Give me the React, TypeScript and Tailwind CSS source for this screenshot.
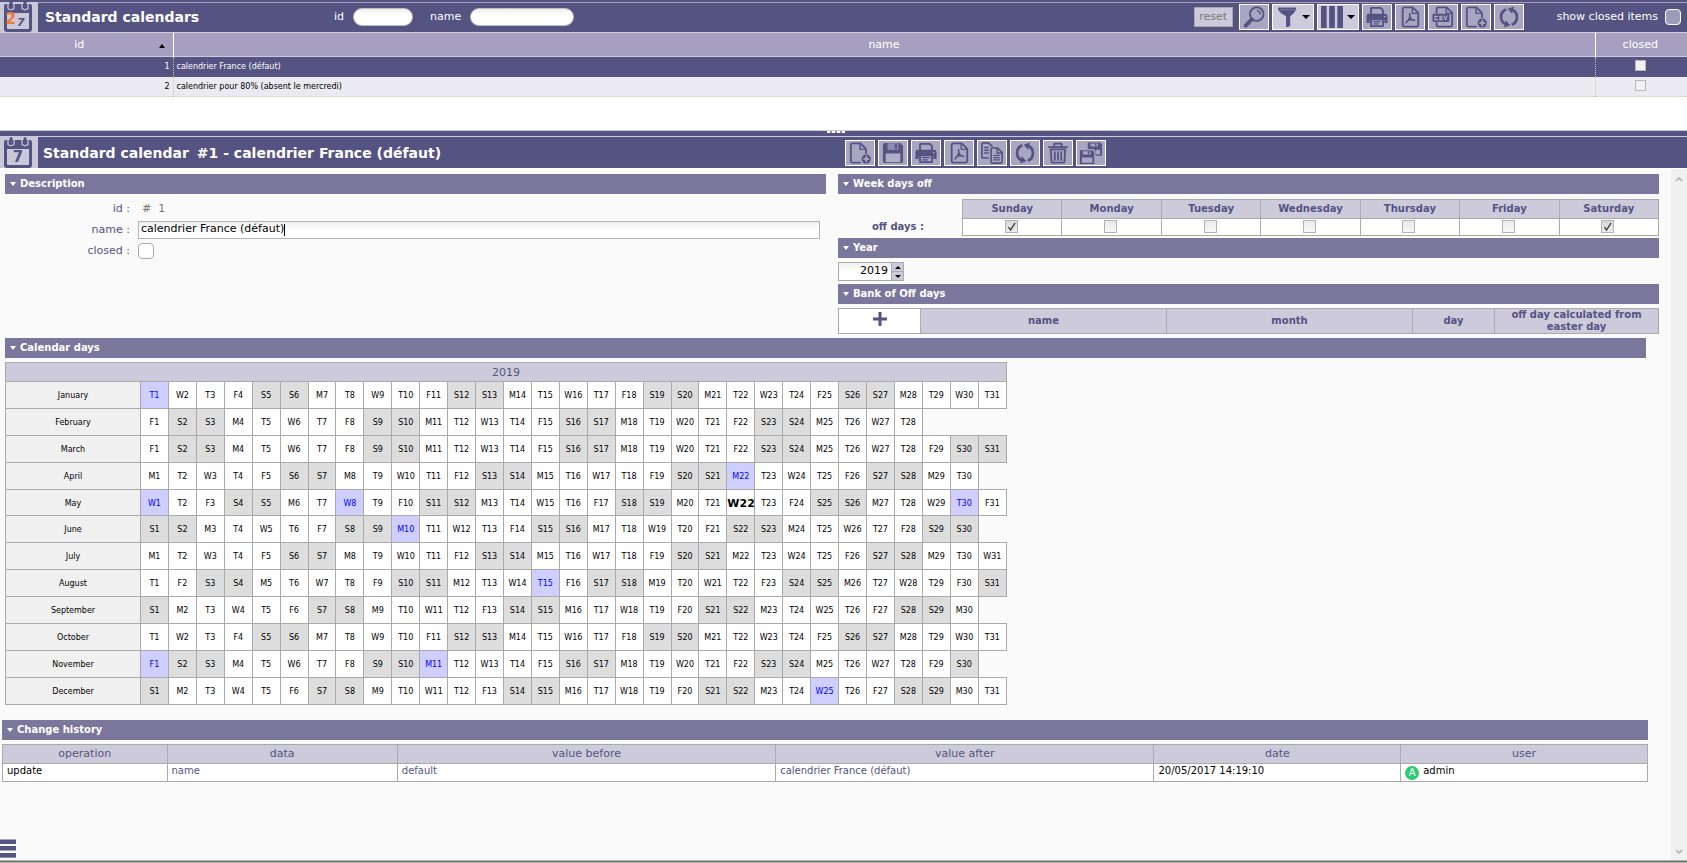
import React, { useState } from "react";

const YEAR = 2019;
const MONTHS = [
  "January", "February", "March", "April", "May", "June",
  "July", "August", "September", "October", "November", "December",
];
const DAYS = ["Sunday", "Monday", "Tuesday", "Wednesday", "Thursday", "Friday", "Saturday"];
const HOLIDAYS = ["1-1", "4-22", "5-1", "5-8", "5-30", "6-10", "8-15", "11-1", "11-11", "12-25"];
const CURRENT_DAY = "5-22";

type IconProps = { children: React.ReactNode };

function Icon({ children }: IconProps) {
  return (
    <svg
      viewBox="0 0 24 24"
      className="h-[22px] w-[22px] shrink-0 text-[#545381]"
      fill="none"
      stroke="currentColor"
      strokeWidth="2"
      strokeLinejoin="round"
      strokeLinecap="round"
      aria-hidden="true"
    >
      {children}
    </svg>
  );
}

const SearchIcon = () => (
  <Icon>
    <circle cx="15" cy="8.800" r="7.400" />
    <path d="M15.500 5a4 4 0 0 1 3.400 3.600" strokeWidth="1.500" />
    <path d="M9.600 14.600 3 21.400" strokeWidth="4.200" />
  </Icon>
);
const FilterIcon = () => (
  <Icon>
    <path d="M2 1.600h20c0 4.400-4 7.400-6.500 9.400V21.500l-2.500 1.500h-2V11C6 8.600 2 5.600 2 1.600Z" fill="currentColor" stroke="none" />
    <path d="M4.500 4h15" stroke="#8b88ac" strokeWidth="0.800" />
  </Icon>
);
const ColumnsIcon = () => (
  <Icon>
    <path d="M0 0h6.200v24H0zM8.900 0h6.200v24H8.900zM17.800 0H24v24h-6.200z" fill="currentColor" stroke="none" />
  </Icon>
);
const PrintIcon = () => (
  <Icon>
    <path d="M5.500 8V2h10.500l2.500 2.500V8" />
    <path d="M3 8.500h18a2.500 2.500 0 0 1 2.500 2.500v7.500H20V15H4v3.500H.5V11A2.500 2.500 0 0 1 3 8.500Z" fill="currentColor" stroke="none" />
    <path d="M5.500 14.500h13V22h-13z" fill="#a9a6c2" />
    <path d="M8.500 17h7M8.500 19.500h5" strokeWidth="1.300" />
    <circle cx="20.500" cy="11.500" r="1" fill="#a9a6c2" stroke="none" />
  </Icon>
);
const PdfIcon = () => (
  <Icon>
    <path d="M4 3.500A2 2 0 0 1 6 1.500h9l6 6V20.500a2 2 0 0 1-2 2H6a2 2 0 0 1-2-2z" />
    <path d="M14.500 2v6h6" strokeWidth="1.500" />
    <path d="M11.500 8.500c0 4 1.500 7 5.500 7.500M11.800 8.500c.4 4-1.300 7.500-4.300 10M8.500 16.500c2.500-1.500 5-2 8.500-1" strokeWidth="1.500" />
  </Icon>
);
const CsvIcon = () => (
  <Icon>
    <path d="M5 7.500v-4a2 2 0 0 1 2-2h9l6 6v13a2 2 0 0 1-2 2H7a2 2 0 0 1-2-2v-2" />
    <path d="M15.500 2v6h6" strokeWidth="1.500" />
    <rect x="0.500" y="8.500" width="18.500" height="9" rx="1.500" fill="currentColor" stroke="none" />
    <path d="M6 11.300H3.300v3.600H6M11 11.200H8.500V13H11v1.900H8.300M13 11l1.700 4 1.700-4" stroke="#b5b2cb" strokeWidth="1.200" />
  </Icon>
);
const NewIcon = () => (
  <Icon>
    <path d="M12 22.500H4a2 2 0 0 1-2-2v-17a2 2 0 0 1 2-2h8.500l6 6V12" />
    <path d="M12 2v6h6" strokeWidth="1.500" />
    <circle cx="18.800" cy="18.500" r="5" fill="currentColor" stroke="none" />
    <path d="M18.800 15.800v5.400M16.100 18.500h5.400" stroke="#b5b2cb" strokeWidth="1.600" />
  </Icon>
);
const RefreshIcon = () => (
  <Icon>
    <path d="M9 3.500A9 9 0 0 0 8.500 20M15 20.500A9 9 0 0 0 15.500 4" strokeWidth="3" strokeLinecap="butt" />
    <path d="M8.500 15.500 13.500 21l-7 2.500zM15.500 8.500 10.500 3l7-2.500z" fill="currentColor" stroke="none" />
  </Icon>
);
const SaveIcon = () => (
  <Icon>
    <path d="M1 3a2 2 0 0 1 2-2h17l3 3v17a2 2 0 0 1-2 2H3a2 2 0 0 1-2-2z" fill="currentColor" stroke="none" />
    <path d="M6 1.500h12V8.500H6z" fill="#8f8cb0" stroke="none" />
    <path d="M14 2.500h2.500v5H14z" fill="currentColor" stroke="none" />
    <path d="M4 12.500h16V22H4z" fill="#b0adc8" stroke="none" />
  </Icon>
);
const CopyIcon = () => (
  <Icon>
    <path d="M8 17.500H2.500a1.500 1.500 0 0 1-1.500-1.500V2.500A1.500 1.500 0 0 1 2.500 1H8l4 3.500" strokeWidth="1.800" />
    <path d="M4 6h4M4 9h4M4 12h4" strokeWidth="1.500" />
    <path d="M11 8a1.500 1.500 0 0 1 1.500-1.500H18l5 5v10a1.500 1.500 0 0 1-1.500 1.500h-9A1.500 1.500 0 0 1 11 21.500z" strokeWidth="1.800" />
    <path d="M17.500 7v5H23" strokeWidth="1.500" />
    <path d="M13.800 14.500h6.400M13.800 17h6.400M13.800 19.500h6.400" strokeWidth="1.300" />
  </Icon>
);
const TrashIcon = () => (
  <Icon>
    <path d="M2 5.500h20M8 5V1.800h8V5" />
    <path d="M4 8h16l-1 13.500a1 1 0 0 1-1 1H6a1 1 0 0 1-1-1z" />
    <path d="M8.500 11v8.500M12 11v8.500M15.500 11v8.500" strokeWidth="1.900" />
  </Icon>
);
const SaveAllIcon = () => (
  <Icon>
    <path d="M8.500 0.500H22l2 2V15H17V9.500L14.500 7.500h-6z" fill="currentColor" stroke="none" />
    <path d="M11.500 1.500h8v3.500h-8zM17.500 8.500h4.500v5h-4.500z" fill="#a9a6c2" stroke="none" />
    <path d="M16.500 1.500h1.500v3h-1.500z" fill="currentColor" stroke="none" />
    <path d="M0 9H13.500l2 2V24H0z" fill="currentColor" stroke="none" />
    <path d="M3 10h8.500v3.500H3zM2 17h11.500v5.500H2z" fill="#a9a6c2" stroke="none" />
    <path d="M8.500 10h1.500v3H8.500z" fill="currentColor" stroke="none" />
  </Icon>
);

function CalendarLogo({ stacked = false }: { stacked?: boolean }) {
  return (
    <div className="flex w-[38px] shrink-0 items-center justify-center self-stretch bg-[#cbc8da] pr-0.5">
      <svg viewBox="0 0 30 32" className="h-8 w-[30px]" aria-hidden="true">
        <path d="M3 3h24q2 0 2 2v23q0 3-3 3H4q-3 0-3-3V5q0-2 2-2Z" fill="#545381" />
        <path d="M4 12h22v15q0 1-1 1H5q-1 0-1-1z" fill="#cbc8da" />
        <path d="M5 3v4.500q3 2.500 6 0V3M19 3v4.500q3 2.500 6 0V3" fill="none" stroke="#cbc8da" strokeWidth="1.200" />
        <rect x="6.500" y="0" width="3" height="7" rx="1.500" fill="#545381" />
        <rect x="20.500" y="0" width="3" height="7" rx="1.500" fill="#545381" />
        {stacked ? (
          <>
            <text x="2" y="23" className="font-['DejaVu_Sans',sans-serif] text-[16px] font-bold" fill="#ee7a36">
              2
            </text>
            <text x="14" y="25" className="font-['DejaVu_Sans',sans-serif] text-[11px] font-bold italic" fill="#545381">
              7
            </text>
          </>
        ) : (
          <text
            x="15"
            y="25"
            textAnchor="middle"
            className="font-['DejaVu_Sans',sans-serif] text-[15px] font-bold"
            fill="#545381"
          >
            7
          </text>
        )}
      </svg>
    </div>
  );
}

function Caret() {
  return (
    <svg viewBox="0 0 8 4" className="h-1 w-2" aria-hidden="true">
      <path d="M0 0h8L4 4z" fill="#000" />
    </svg>
  );
}

function ToolButton({ label, menu = false, children }: { label: string; menu?: boolean; children: React.ReactNode }) {
  return (
    <button
      type="button"
      aria-label={label}
      className={
        menu
          ? "flex h-[26px] w-[42px] items-center justify-center gap-1 border border-white bg-[#cdcadb]"
          : "flex h-[26px] w-[30px] items-center justify-center border border-white bg-[#a9a6c2]"
      }
    >
      {children}
      {menu && <Caret />}
    </button>
  );
}

function Tick({ label, checked = false }: { label: string; checked?: boolean }) {
  const [on, setOn] = useState(checked);
  return (
    <span className="relative mx-auto block h-[13px] w-[13px]">
      <input
        type="checkbox"
        aria-label={label}
        checked={on}
        onChange={() => setOn(!on)}
        className="block h-[13px] w-[13px] appearance-none border border-[#b3b3b3] bg-linear-to-b from-[#e9e9e9] to-[#f8f8f8] checked:from-[#d5d5d5] checked:to-[#eeeeee]"
      />
      {on && (
        <svg viewBox="0 0 13 13" className="pointer-events-none absolute inset-0 h-[13px] w-[13px]" aria-hidden="true">
          <path d="M3.500 7 5.500 10 10 3" fill="none" stroke="#333" strokeWidth="1.300" />
        </svg>
      )}
    </span>
  );
}

function SectionTitle({ children }: { children: React.ReactNode }) {
  return (
    <h2 className="bg-[#7b769b] text-[10px] leading-5 font-bold text-white">
      <button type="button" className="flex h-5 w-full items-center gap-1 pl-[5px] text-left">
        <svg viewBox="0 0 6 4" className="h-1 w-1.5" aria-hidden="true">
          <path d="M0 0h6L3 4z" fill="#fff" />
        </svg>
        {children}
      </button>
    </h2>
  );
}

const th = "border border-[#aaaaaa] bg-[#cdcadb] text-[#545381]";

function StandardList() {
  const rows = [
    { id: 1, name: "calendrier France (défaut)" },
    { id: 2, name: "calendrier pour 80% (absent le mercredi)" },
  ];
  return (
    <section>
      <header className="flex h-8 items-center border-t-2 border-[#545381] bg-[#545381] text-[11px] text-white shadow-[inset_0_1px_0_#a69fbf]">
        <CalendarLogo stacked />
        <h1 className="w-[289px] pl-[7px] text-[14px] font-bold">Standard calendars</h1>
        <label htmlFor="filter-id" className="pl-[7px]">id</label>
        <input id="filter-id" className="ml-[9px] h-[18px] w-[60px] rounded-[9px] border border-[#c0c0c0] bg-linear-to-b from-[#eeeeee] to-white to-40% px-2 text-black" />
        <label htmlFor="filter-name" className="ml-[17px]">name</label>
        <input id="filter-name" className="ml-[9px] h-[18px] w-[104px] rounded-[9px] border border-[#c0c0c0] bg-linear-to-b from-[#eeeeee] to-white to-40% px-2 text-black" />
        <div className="ml-auto flex items-center gap-[3px] pr-1.5">
          <button type="button" className="mr-[3px] h-5 w-[39px] border border-[#a9a6a6] bg-[#cdcadb] text-[11px] text-[#777]">
            reset
          </button>
          <ToolButton label="Search"><SearchIcon /></ToolButton>
          <ToolButton label="Filter" menu><FilterIcon /></ToolButton>
          <ToolButton label="Columns" menu><ColumnsIcon /></ToolButton>
          <ToolButton label="Print"><PrintIcon /></ToolButton>
          <ToolButton label="Export PDF"><PdfIcon /></ToolButton>
          <ToolButton label="Export CSV"><CsvIcon /></ToolButton>
          <ToolButton label="New"><NewIcon /></ToolButton>
          <ToolButton label="Refresh"><RefreshIcon /></ToolButton>
          <label htmlFor="show-closed" className="ml-[30px]">show closed items</label>
          <input id="show-closed" type="checkbox" className="ml-1 h-4 w-4 appearance-none rounded border border-white bg-[#9d9aba] checked:bg-white" />
        </div>
      </header>
      <table className="w-full table-fixed border-collapse text-[8px]">
        <colgroup>
          <col className="w-[173px]" />
          <col />
          <col className="w-[92px]" />
        </colgroup>
        <thead>
          <tr className="h-6 border-y border-[#cdcadb] bg-[#a69fbf] text-[11px] text-white">
            <th className="border-r border-white p-0 pt-0.5 font-normal">
              <div className="flex items-center">
                <span className="flex-1">id</span>
                <svg viewBox="0 0 6 4" className="mr-2 h-1 w-1.5" aria-hidden="true">
                  <path d="M3 0 6 4H0z" fill="#000" />
                </svg>
              </div>
            </th>
            <th className="border-r border-white p-0 pt-0.5 font-normal">name</th>
            <th className="p-0 pt-0.5 pr-0.5 font-normal">closed</th>
          </tr>
        </thead>
        <tbody>
          {rows.map((row, i) => (
            <tr
              key={row.id}
              className={
                i === 0
                  ? "h-5 bg-[#545381] text-white"
                  : "h-5 border-b border-dotted border-b-[#d3c8a0] bg-[#ebeaf1] text-black"
              }
            >
              <td className="border-r border-dotted border-r-[#d3c8a0] p-0 pt-px pr-[3px] text-right">{row.id}</td>
              <td className="border-r border-dotted border-r-[#d3c8a0] p-0 pt-px pl-[3px]">{row.name}</td>
              <td className="p-0 pr-0.5 pb-0.5">
                <input
                  type="checkbox"
                  aria-label={"closed " + row.id}
                  className="mx-auto block h-[11px] w-[11px] appearance-none border border-[#b8b8b8] bg-[#f2f2f2] checked:bg-[#777]"
                />
              </td>
            </tr>
          ))}
        </tbody>
      </table>
      <div className="h-[33px] bg-white" />
    </section>
  );
}

function Description() {
  return (
    <section className="text-[11px] text-[#545381]">
      <SectionTitle>Description</SectionTitle>
      <div className="grid grid-cols-[125px_1fr] items-center gap-x-2 pt-1 pr-1.5">
        <span className="text-right leading-[21px]">id&nbsp;:</span>
        <span className="pl-1 leading-[21px] text-[#777]">#&nbsp; 1</span>
        <label htmlFor="name" className="text-right leading-[21px]">name&nbsp;:</label>
        <div className="flex h-[18px] items-center border border-[#b3b3b3] bg-linear-to-b from-[#efefef] to-white to-50% pl-0.5">
          <input
            id="name"
            defaultValue="calendrier France (défaut)"
            className="[field-sizing:content] bg-transparent text-black outline-none"
          />
          <span className="h-3 w-px bg-black" />
        </div>
        <label htmlFor="closed" className="text-right leading-[21px]">closed&nbsp;:</label>
        <input id="closed" type="checkbox" className="h-4 w-4 appearance-none rounded border border-[#aaaaaa] bg-white checked:bg-[#545381]" />
      </div>
    </section>
  );
}

function Settings() {
  const [year, setYear] = useState(YEAR);
  return (
    <section className="flex flex-col text-[10px] text-[#545381]">
      <SectionTitle>Week days off</SectionTitle>
      <div className="flex items-end pt-[5px] pb-0.5">
        <div className="w-[124px] shrink-0 pr-[38px] pb-0.5 text-right leading-[15px] font-bold">off days :</div>
        <table className="flex-1 table-fixed border-collapse">
          <thead>
            <tr className="h-[19px]">
              {DAYS.map((d) => (
                <th key={d} className={th + " p-0 leading-[18px] font-bold"}>{d}</th>
              ))}
            </tr>
          </thead>
          <tbody>
            <tr className="h-[17px] bg-white">
              {DAYS.map((d, i) => (
                <td key={d} className="w-[99px] border border-[#aaaaaa] p-0 pr-0.5 pb-0.5">
                  <Tick label={d} checked={i === 0 || i === 6} />
                </td>
              ))}
            </tr>
          </tbody>
        </table>
      </div>
      <SectionTitle>Year</SectionTitle>
      <div className="pt-1 pb-[3px]">
        <div className="flex h-[19px] w-[66px] border border-[#aaaaaa] bg-white text-[11px]">
          <input
            aria-label="year"
            inputMode="numeric"
            value={year}
            onChange={(e) => setYear(Number(e.target.value) || YEAR)}
            className="min-w-0 flex-1 bg-linear-to-b from-[#efefef] to-white to-50% pr-[3px] text-right text-black outline-none"
          />
          <div className="flex w-3 flex-col border-l border-[#aaaaaa] bg-[#cdcadb]">
            <button type="button" aria-label="next year" onClick={() => setYear(year + 1)} className="flex flex-1 items-center justify-center border-b border-[#aaaaaa]">
              <svg viewBox="0 0 6 3" className="h-[3px] w-1.5" aria-hidden="true"><path d="M3 0 6 3H0z" /></svg>
            </button>
            <button type="button" aria-label="previous year" onClick={() => setYear(year - 1)} className="flex flex-1 items-center justify-center">
              <svg viewBox="0 0 6 3" className="h-[3px] w-1.5" aria-hidden="true"><path d="M0 0h6L3 3z" /></svg>
            </button>
          </div>
        </div>
      </div>
      <SectionTitle>Bank of Off days</SectionTitle>
      <div className="pt-1">
        <table className="w-full table-fixed border-collapse leading-3">
          <colgroup>
            <col className="w-[10%]" />
            <col className="w-[30%]" />
            <col className="w-[30%]" />
            <col className="w-[10%]" />
            <col className="w-[20%]" />
          </colgroup>
          <thead>
            <tr className="h-[25px]">
              <th className="border border-[#aaaaaa] bg-white p-0 pb-1">
                <button type="button" aria-label="Add off day" className="mx-auto block h-4 w-4">
                  <svg viewBox="0 0 16 16" className="h-4 w-4" aria-hidden="true">
                    <path d="M8 1v14M1 8h14" stroke="#545381" strokeWidth="3" />
                  </svg>
                </button>
              </th>
              <th className={th + " p-0"}>name</th>
              <th className={th + " p-0"}>month</th>
              <th className={th + " p-0"}>day</th>
              <th className={th + " px-2 py-0"}>off day calculated from easter day</th>
            </tr>
          </thead>
        </table>
      </div>
    </section>
  );
}

function dayClass(key: string, weekday: number) {
  if (key === CURRENT_DAY) return "border border-[#aaaaaa] bg-white p-0 pt-0.5 text-[11px] leading-3 font-bold";
  if (HOLIDAYS.includes(key)) return "border border-[#aaaaaa] bg-[#ceceff] p-0 pt-0.5 text-[#0000ff]";
  if (weekday === 0 || weekday === 6) return "border border-[#aaaaaa] bg-[#dddddd] p-0 pt-0.5";
  return "border border-[#aaaaaa] bg-white p-0 pt-0.5";
}

function CalendarDays() {
  return (
    <section className="pt-1 pr-[25px] pl-[5px]">
      <SectionTitle>Calendar days</SectionTitle>
      <table className="mt-1 w-[1002px] table-fixed border-collapse text-center text-[8px] leading-3 text-black">
        <colgroup>
          <col className="w-[135px]" />
          {Array.from({ length: 31 }, (_, i) => <col key={i} />)}
        </colgroup>
        <thead>
          <tr className="h-[19px]">
            <th colSpan={32} className={th + " p-0 pt-0.5 text-[11px] font-normal"}>{YEAR}</th>
          </tr>
        </thead>
        <tbody>
          {MONTHS.map((month, m) => {
            const count = new Date(YEAR, m + 1, 0).getDate();
            return (
              <tr key={month} className={month === "May" ? "h-[26px]" : "h-[27px]"}>
                <th className="border border-[#aaaaaa] bg-[#f0f0f0] p-0 pt-0.5 font-normal">{month}</th>
                {Array.from({ length: count }, (_, i) => {
                  const weekday = new Date(YEAR, m, i + 1).getDay();
                  return (
                    <td key={i} className={dayClass(m + 1 + "-" + (i + 1), weekday)}>
                      {DAYS[weekday][0] + (i + 1)}
                    </td>
                  );
                })}
              </tr>
            );
          })}
        </tbody>
      </table>
    </section>
  );
}

function History() {
  const td = "border border-[#aaaaaa] bg-white py-0 pr-0 pl-1";
  return (
    <section className="pt-[15px] pr-[23px] pl-0.5">
      <SectionTitle>Change history</SectionTitle>
      <table className="mt-1 w-full table-fixed border-collapse text-left text-[10px] text-[#545381]">
        <colgroup>
          <col className="w-[10%]" />
          <col className="w-[14%]" />
          <col className="w-[23%]" />
          <col className="w-[23%]" />
          <col className="w-[15%]" />
          <col className="w-[15%]" />
        </colgroup>
        <thead>
          <tr className="h-[19px] text-center text-[11px]">
            {["operation", "data", "value before", "value after", "date", "user"].map((h) => (
              <th key={h} className={th + " p-0 leading-[18px] font-normal"}>{h}</th>
            ))}
          </tr>
        </thead>
        <tbody>
          <tr className="h-[18px] align-top leading-[14px]">
            <td className={td + " text-black"}>update</td>
            <td className={td}>name</td>
            <td className={td}>default</td>
            <td className={td}>calendrier France (défaut)</td>
            <td className={td + " text-black"}>20/05/2017 14:19:10</td>
            <td className={td + " text-black"}>
              <span className="flex items-start gap-1">
                <span className="mt-0.5 flex h-[14px] w-[14px] items-center justify-center rounded-full bg-[#2ecc71] text-[10px] leading-none text-white">A</span>
                admin
              </span>
            </td>
          </tr>
        </tbody>
      </table>
    </section>
  );
}

export default function App() {
  return (
    <div className="flex min-h-screen flex-col bg-[#fafafa] font-['DejaVu_Sans',Verdana,sans-serif]">
      <StandardList />
      <div className="flex h-[7px] items-start border-y border-[#cdcadb] bg-[#545381]">
        <div className="mx-auto h-0.5 pr-4">
          <div className="h-0.5 w-[18px] bg-[repeating-linear-gradient(90deg,#ffffff_0_3px,#8f8cb0_3px_5px)]" />
        </div>
      </div>
      <header className="flex h-8 items-center border-b border-white bg-[#545381] text-white">
        <CalendarLogo />
        <div className="flex w-[807px] gap-2 pt-px pl-[5px] text-[14px] font-bold">
          <span>Standard calendar</span>
          <span>#1 - calendrier France (défaut)</span>
        </div>
        <div className="flex gap-[3px]">
          <ToolButton label="New"><NewIcon /></ToolButton>
          <ToolButton label="Save"><SaveIcon /></ToolButton>
          <ToolButton label="Print"><PrintIcon /></ToolButton>
          <ToolButton label="Export PDF"><PdfIcon /></ToolButton>
          <ToolButton label="Copy"><CopyIcon /></ToolButton>
          <ToolButton label="Refresh"><RefreshIcon /></ToolButton>
          <ToolButton label="Delete"><TrashIcon /></ToolButton>
          <ToolButton label="Save all"><SaveAllIcon /></ToolButton>
        </div>
      </header>
      <div className="flex flex-1">
        <main className="flex min-w-0 flex-1 flex-col">
          <div className="grid grid-cols-2 gap-3 pt-[5px] pr-3 pl-[5px]">
            <Description />
            <Settings />
          </div>
          <CalendarDays />
          <History />
          <button type="button" aria-label="Menu" className="mt-auto mb-0.5 flex w-4 flex-col gap-0.5">
            <span className="h-[5px] w-4 border-t border-[#a9a6c2] bg-[#545381]" />
            <span className="h-[5px] w-4 border-b border-[#a9a6c2] bg-[#545381]" />
            <span className="h-[5px] w-4 border-b border-[#8f8cb0] bg-[#545381]" />
          </button>
        </main>
        <div className="flex w-4 flex-col items-center justify-between bg-[#f0f0f0] pt-[7px] pb-[5px]">
          <svg viewBox="0 0 8 6" className="h-1.5 w-2" aria-hidden="true">
            <path d="M1 5 4 2l3 3" fill="none" stroke="#bbb" strokeWidth="1.800" />
          </svg>
          <svg viewBox="0 0 8 6" className="h-1.5 w-2" aria-hidden="true">
            <path d="M1 1l3 3 3-3" fill="none" stroke="#bbb" strokeWidth="1.800" />
          </svg>
        </div>
      </div>
      <div className="h-[3px] border-y border-[#b5b5ad] bg-[#6b6b66]" />
    </div>
  );
}
